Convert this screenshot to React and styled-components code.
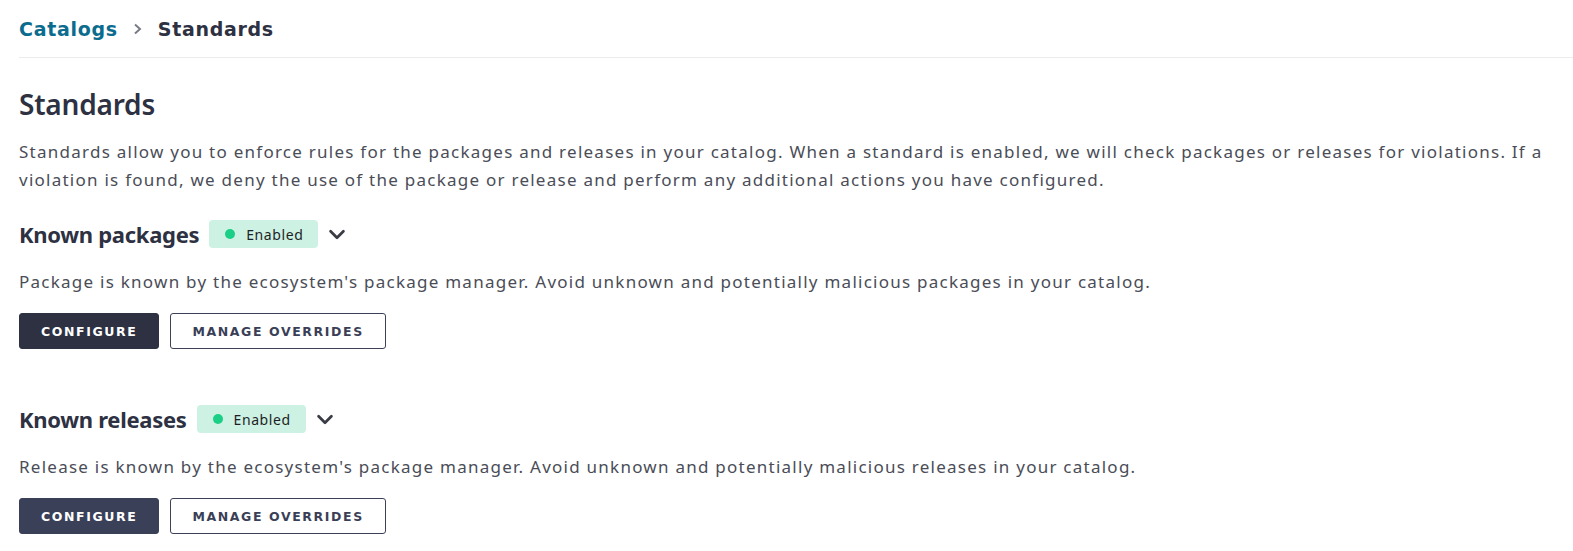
import React from "react";
import styled, { createGlobalStyle } from "styled-components";

const GlobalStyle = createGlobalStyle`
  body {
    margin: 0;
    background: #ffffff;
    font-family: "Noto Sans", "Liberation Sans", sans-serif;
  }
`;

const Page = styled.div`
  padding: 0 0 0 19px;
  color: #2d3142;
`;

const Breadcrumbs = styled.nav`
  display: flex;
  align-items: center;
  gap: 15px;
  height: 57px;
  border-bottom: 1px solid #ececec;
  font-family: "DejaVu Sans", sans-serif;
  font-weight: 700;
  font-size: 19px;
  letter-spacing: 0.7px;
`;

const CrumbLink = styled.a`
  color: #0b6c8e;
  text-decoration: none;
`;

const CrumbCurrent = styled.span`
  color: #2d3142;
`;

const Content = styled.main`
  padding: 28px 19px 0 0;
`;

const Title = styled.h1`
  margin: 0;
  font-size: 28px;
  font-weight: 600;
  line-height: 36px;
  letter-spacing: -0.2px;
  color: #2d3142;
`;

const Lead = styled.p`
  margin: 16px 0 0;
  font-size: 17px;
  line-height: 28px;
  letter-spacing: 1.25px;
  color: #4a4d57;
`;

const Standard = styled.section`
  margin-top: ${(p) => p.$gap}px;
`;

const StandardHeader = styled.div`
  display: flex;
  align-items: center;
  gap: 10px;
  padding-top: 5px;
`;

const StandardName = styled.h2`
  margin: 0;
  font-size: 22px;
  font-weight: 700;
  letter-spacing: -0.3px;
  color: #2d3142;
`;

const Badge = styled.span`
  display: inline-flex;
  align-items: center;
  gap: 11px;
  height: 28px;
  padding: 0 15px 0 16px;
  border-radius: 4px;
  background: #cdf1e2;
  color: #1d1f26;
  font-size: 14px;
  letter-spacing: 0.6px;
`;

const Dot = styled.span`
  width: 10px;
  height: 10px;
  border-radius: 50%;
  background: #1bcf86;
`;

const Toggle = styled.button`
  display: flex;
  align-items: center;
  padding: 0;
  margin-left: -2px;
  border: none;
  background: transparent;
  color: #3a3c45;
  cursor: pointer;
`;

const Description = styled.p`
  margin: 19px 0 0;
  font-size: 17px;
  line-height: 28px;
  letter-spacing: 1.25px;
  color: #4a4d57;
`;

const Actions = styled.div`
  display: flex;
  gap: 11px;
  margin-top: 17px;
`;

const Button = styled.button`
  height: 36px;
  padding: 0 21px;
  border-radius: 3px;
  border: 1px solid ${(p) => (p.$primary ? p.$tone : "#3d4157")};
  background: ${(p) => (p.$primary ? p.$tone : "#ffffff")};
  color: ${(p) => (p.$primary ? "#ffffff" : "#3a3f57")};
  font-family: "DejaVu Sans", sans-serif;
  font-size: 12.5px;
  font-weight: 700;
  letter-spacing: 1.6px;
  cursor: pointer;
`;

const Chevron = () => (
  <svg width="22" height="22" viewBox="0 0 24 24" fill="none" stroke="currentColor" strokeWidth="3" strokeLinecap="round" strokeLinejoin="round">
    <path d="M5 9l7 7 7-7" />
  </svg>
);

const standards = [
  {
    name: "Known packages",
    text: "Package is known by the ecosystem's package manager. Avoid unknown and potentially malicious packages in your catalog.",
    tone: "#2d3142",
    gap: 20,
  },
  {
    name: "Known releases",
    text: "Release is known by the ecosystem's package manager. Avoid unknown and potentially malicious releases in your catalog.",
    tone: "#3b4059",
    gap: 50,
  },
];

export default function App() {
  return (
    <Page>
      <GlobalStyle />
      <Breadcrumbs>
        <CrumbLink href="#">Catalogs</CrumbLink>
        <svg width="10" height="12" viewBox="0 0 10 12" fill="none" stroke="#7a7c85" strokeWidth="2">
          <path d="M2 1.5l5 4.5-5 4.5" />
        </svg>
        <CrumbCurrent>Standards</CrumbCurrent>
      </Breadcrumbs>
      <Content>
        <Title>Standards</Title>
        <Lead>
          Standards allow you to enforce rules for the packages and releases in your catalog. When a standard is enabled, we will check packages or releases for violations. If a violation is found, we deny the use of the package or release and perform any additional actions you have configured.
        </Lead>
        {standards.map((s) => (
          <Standard key={s.name} $gap={s.gap}>
            <StandardHeader>
              <StandardName>{s.name}</StandardName>
              <Badge>
                <Dot />
                Enabled
              </Badge>
              <Toggle aria-label="Expand">
                <Chevron />
              </Toggle>
            </StandardHeader>
            <Description>{s.text}</Description>
            <Actions>
              <Button $primary $tone={s.tone}>CONFIGURE</Button>
              <Button>MANAGE OVERRIDES</Button>
            </Actions>
          </Standard>
        ))}
      </Content>
    </Page>
  );
}
